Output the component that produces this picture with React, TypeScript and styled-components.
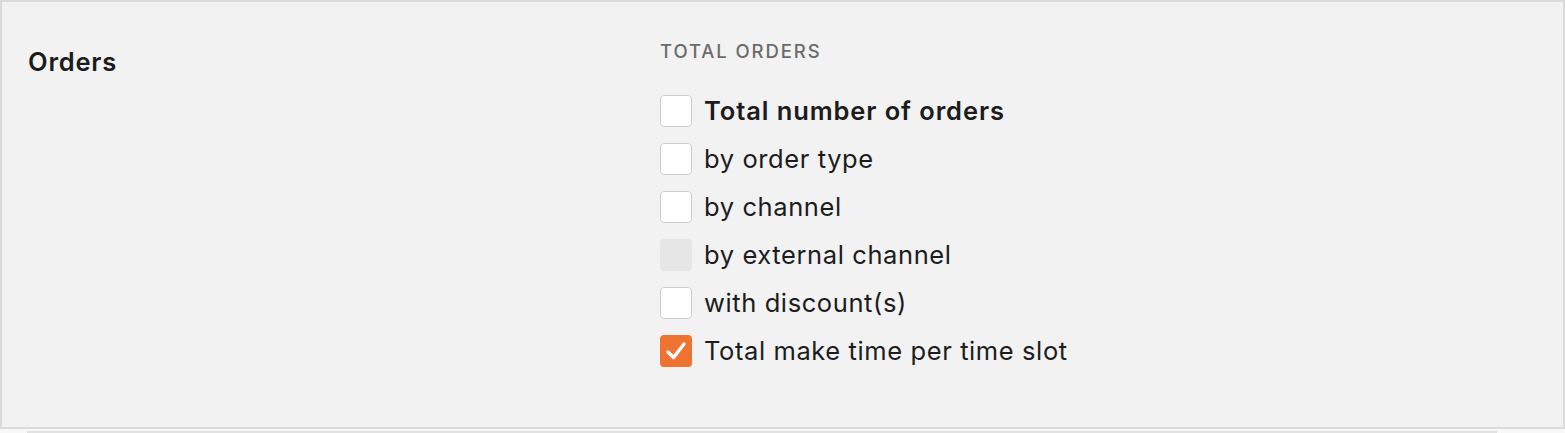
import styled, { createGlobalStyle } from "styled-components";

const GlobalStyle = createGlobalStyle`
  body {
    margin: 0;
    background: #f8f8f8;
    font-family: Inter, "Noto Sans", "Liberation Sans", sans-serif;
    color: #1c1c1c;
  }
`;

const Page = styled.div`
  display: flex;
  flex-direction: column;
  gap: 2px;
`;

const Card = styled.section`
  display: grid;
  grid-template-columns: 632px 1fr;
  height: 425px;
  box-sizing: content-box;
  padding: 0 26px;
  background: #f2f2f2;
  border: 2px solid #dadada;
`;

const NextCard = styled.div`
  height: 3px;
  margin: 0 68px 0 27px;
  background: #e2e2e2;
`;

const Heading = styled.h2`
  margin: 45px 0 0;
  font-size: 25.5px;
  font-weight: 600;
  letter-spacing: 0.8px;
  line-height: 30px;
`;

const Group = styled.div`
  display: flex;
  flex-direction: column;
  padding-top: 37px;
`;

const GroupLabel = styled.div`
  font-size: 18.5px;
  font-weight: 500;
  letter-spacing: 1.9px;
  text-transform: uppercase;
  color: #6b6b6b;
  line-height: 24px;
  margin-bottom: 24px;
`;

const Option = styled.label`
  display: flex;
  align-items: center;
  gap: 12px;
  height: 48px;
  font-size: 25.5px;
  line-height: 32px;
`;

const Box = styled.span<{ $state: "off" | "on" | "disabled" }>`
  width: 32px;
  height: 32px;
  box-sizing: border-box;
  border-radius: 4px;
  display: flex;
  align-items: center;
  justify-content: center;
  flex-shrink: 0;
  background: ${(p) =>
    p.$state === "on" ? "#ee7230" : p.$state === "disabled" ? "#e6e6e6" : "#ffffff"};
  border: ${(p) => (p.$state === "off" ? "1.5px solid #cccccc" : "none")};
`;

const Text = styled.span<{ $bold?: boolean }>`
  font-weight: ${(p) => (p.$bold ? 600 : 400)};
  letter-spacing: ${(p) => (p.$bold ? "0.9px" : "0.6px")};
`;

const options: { text: string; state: "off" | "on" | "disabled"; bold?: boolean }[] = [
  { text: "Total number of orders", state: "off", bold: true },
  { text: "by order type", state: "off" },
  { text: "by channel", state: "off" },
  { text: "by external channel", state: "disabled" },
  { text: "with discount(s)", state: "off" },
  { text: "Total make time per time slot", state: "on" },
];

function Check() {
  return (
    <svg width="24" height="24" viewBox="0 0 24 24">
      <path d="M4 13 L9.5 18.5 L20 5" fill="none" stroke="#fff" strokeWidth="3.4" strokeLinecap="round" strokeLinejoin="round" />
    </svg>
  );
}

export default function App() {
  return (
    <Page>
      <GlobalStyle />
      <Card>
        <Heading>Orders</Heading>
        <Group>
          <GroupLabel>Total orders</GroupLabel>
          {options.map((o) => (
            <Option key={o.text}>
              <Box $state={o.state}>{o.state === "on" && <Check />}</Box>
              <Text $bold={o.bold}>{o.text}</Text>
            </Option>
          ))}
        </Group>
      </Card>
      <NextCard />
    </Page>
  );
}
